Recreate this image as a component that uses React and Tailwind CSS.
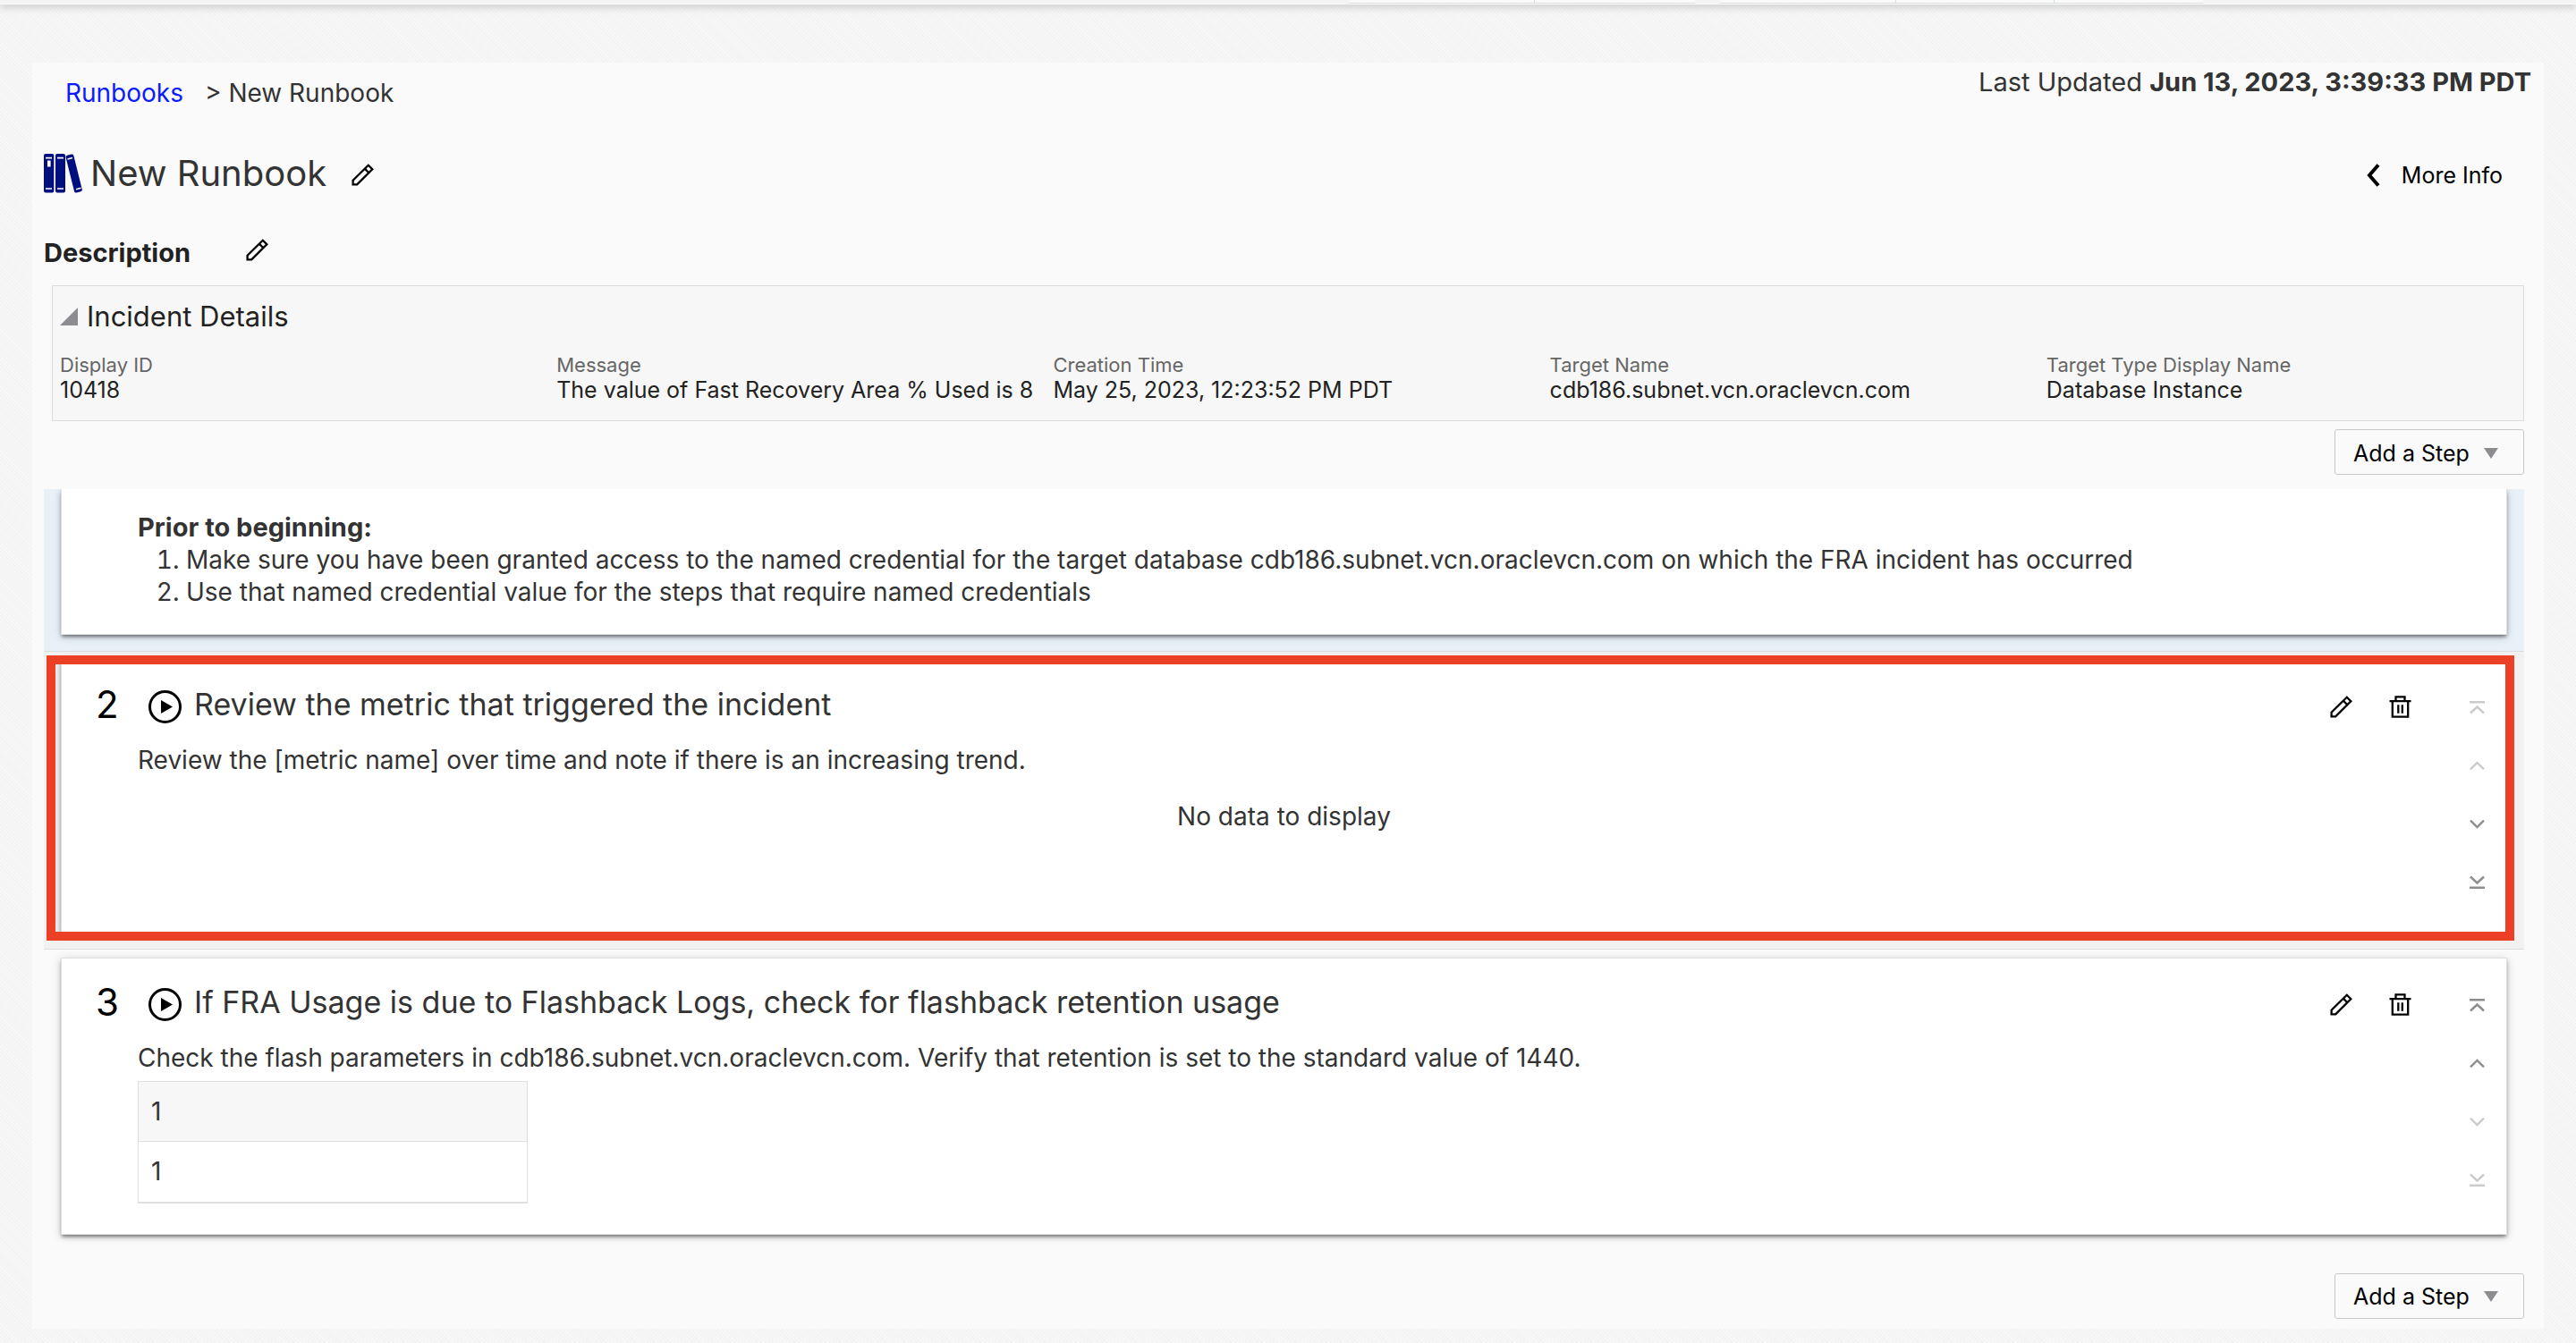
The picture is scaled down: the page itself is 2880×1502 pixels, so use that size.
import React from "react";

function PencilIcon() {
  return (
    <svg width="25" height="25" viewBox="0 0 25 25" fill="none" stroke="currentColor" strokeWidth="2.3" aria-hidden="true">
      <path d="M18.8 1.8 L23.3 6.3 L6.2 23.4 H1.6 V18.8 Z" />
      <path d="M14.8 5.6 L19.4 10.2" />
    </svg>
  );
}

function TrashIcon() {
  return (
    <svg width="25" height="25" viewBox="0 0 25 25" fill="none" stroke="currentColor" strokeWidth="2.3" aria-hidden="true">
      <path d="M0.5 6.2 H24.5 M7.5 6 V1.4 H17.5 V6 M3.8 6.2 V23.6 H21.2 V6.2" />
      <path d="M10.3 10.3 V19.8 M14.8 10.3 V19.8" />
    </svg>
  );
}

function PlayIcon() {
  return (
    <svg width="37" height="37" viewBox="0 0 37 37" aria-hidden="true">
      <circle cx="18.5" cy="18.5" r="17" fill="none" stroke="currentColor" strokeWidth="3" />
      <path d="M14 11 L27 18.5 L14 26 Z" fill="currentColor" />
    </svg>
  );
}

function BooksIcon() {
  return (
    <svg width="44" height="44" viewBox="0 0 44 44" aria-hidden="true">
      <g fill="#000f7f">
        <rect x="0" y="0" width="11.3" height="43.5" rx="2" />
        <rect x="13" y="0" width="11" height="43.5" rx="2" />
        <rect x="29.2" y="0.5" width="9" height="43" rx="2" transform="rotate(-14 33.7 22)" />
      </g>
      <g stroke="#fff" strokeWidth="1.6">
        <path d="M2 4.6 H9 M2 39 H9 M15 4.6 H22 M15 39 H22" />
        <path d="M26.5 6 L32 4.4 M36 39.7 L41.5 38.2" />
      </g>
      <rect x="4" y="7.5" width="3.6" height="7" fill="#fff" />
    </svg>
  );
}

const ARROWS = {
  top: "M1 2.2 H18 M2 14.5 L9.5 7.5 L17 14.5",
  up: "M2 12.3 L9.5 5 L17 12.3",
  down: "M2 4.7 L9.5 12 L17 4.7",
  bottom: "M2 2.5 L9.5 9.5 L17 2.5 M1 14.8 H18",
};

function MoveButton({ kind, label, disabled }) {
  return (
    <button
      type="button"
      aria-label={label}
      disabled={disabled}
      className="flex size-8 items-center justify-center text-[#8b8d90] disabled:text-[#cbcbcb]"
    >
      <svg width="19" height="17" viewBox="0 0 19 17" fill="none" stroke="currentColor" strokeWidth="2.4" aria-hidden="true">
        <path d={ARROWS[kind]} />
      </svg>
    </button>
  );
}

function AddStepButton() {
  return (
    <button
      type="button"
      className="flex h-[51px] w-[212px] items-center gap-4 rounded-[3px] border border-[#c8c8c8] pt-0.5 pl-5 text-[25px] leading-7 whitespace-nowrap text-black"
    >
      Add a Step
      <svg width="16" height="12" viewBox="0 0 16 12" fill="#8b8d90" aria-hidden="true">
        <path d="M0 0 H16 L8 12 Z" />
      </svg>
    </button>
  );
}

const CARD =
  "mx-[19px] border-[#dfdfdf] bg-white shadow-[0_3px_4px_-1px_rgba(0,0,0,0.5),0_2px_10px_rgba(0,0,0,0.16)]";

function StepCard({ number, title, text, atTop, atBottom, children }) {
  return (
    <article className={`${CARD} flex min-h-[305px] border`}>
      <div className="min-w-0 flex-1 pt-[25px]">
        <header className="flex h-12 items-center pr-[18px] pl-[38px]">
          <span className="w-[59px] text-[42px] leading-[48px] text-black">{number}</span>
          <button type="button" aria-label={`Run step ${number}`} className="mt-1 mr-3.5 text-black">
            <PlayIcon />
          </button>
          <h3 className="flex-1 text-[34px] leading-[48px]">{title}</h3>
          <div className="flex gap-[34px] pt-1 text-black">
            <button type="button" aria-label="Edit step" className="flex size-8 items-center justify-center">
              <PencilIcon />
            </button>
            <button type="button" aria-label="Delete step" className="flex size-8 items-center justify-center">
              <TrashIcon />
            </button>
          </div>
        </header>
        <div className="mt-5 pb-[34px] pl-[85px]">
          <p>{text}</p>
          {children}
        </div>
      </div>
      <div className="flex w-[85px] flex-col items-end gap-[33px] pt-9 pr-[17px]">
        <MoveButton kind="top" label="Move to top" disabled={atTop} />
        <MoveButton kind="up" label="Move up" disabled={atTop} />
        <MoveButton kind="down" label="Move down" disabled={atBottom} />
        <MoveButton kind="bottom" label="Move to bottom" disabled={atBottom} />
      </div>
    </article>
  );
}

const DETAILS = [
  ["Display ID", "10418"],
  ["Message", "The value of Fast Recovery Area % Used is 8"],
  ["Creation Time", "May 25, 2023, 12:23:52 PM PDT"],
  ["Target Name", "cdb186.subnet.vcn.oraclevcn.com"],
  ["Target Type Display Name", "Database Instance"],
];

export default function App() {
  return (
    <div className="min-h-screen bg-[repeating-linear-gradient(45deg,#f3f3f3_0px,#f3f3f3_1px,#f8f8f8_2px,#f8f8f8_3px)] pb-[18px] font-['Inter',sans-serif] text-[28px] leading-9 text-[#333]">
      <div className="flex h-[5px] justify-end border-b border-white bg-[#f4f4f4] pr-[417px] shadow-[0_2px_10px_rgba(0,0,0,0.28)]">
        <div className="w-[208px] border-r border-b border-[#d8dde0] bg-[#fafafa]" />
        <div className="mr-7 w-[179px] border-b border-[#d8dde0] bg-[#fafafa]" />
        <div className="w-[197px] border-r border-b border-[#d8dde0] bg-[#fafafa]" />
        <div className="w-[177px] border-r border-b border-[#d8dde0] bg-[#fafafa]" />
        <div className="w-[166px] border-b border-[#d8dde0] bg-[#fafafa]" />
      </div>

      <main className="mx-9 mt-[65px] bg-[#fafafa] pr-[22px] pb-[11px] pl-[13px]">
        <div className="-mr-2 flex items-start justify-between">
          <nav aria-label="Breadcrumb" className="flex pt-4 pl-6">
            <a href="#runbooks" className="mr-6 text-[#0a1cff]">Runbooks</a>
            <span>&gt; New Runbook</span>
          </nav>
          <p className="pt-1 text-[29px]">
            Last Updated <b className="font-bold">Jun 13, 2023, 3:39:33 PM PDT</b>
          </p>
        </div>

        <div className="mt-12 flex h-12 items-center">
          <BooksIcon />
          <h1 className="ml-2 text-[40px] leading-[48px]">New Runbook</h1>
          <button type="button" aria-label="Edit name" className="mt-0.5 ml-7 text-black">
            <PencilIcon />
          </button>
          <button type="button" className="mt-1 mr-6 ml-auto flex items-center gap-6 text-[25px] leading-7 text-black">
            <svg width="15" height="26" viewBox="0 0 15 26" fill="none" stroke="currentColor" strokeWidth="4" aria-hidden="true">
              <path d="M13 1.5 L3 13 L13 24.5" />
            </svg>
            More Info
          </button>
        </div>

        <div className="mt-[47px] flex items-start">
          <h2 className="w-[226px] text-[29px] font-bold text-[#222]">Description</h2>
          <button type="button" aria-label="Edit description" className="mt-0.5 text-black">
            <PencilIcon />
          </button>
        </div>

        <section className="mt-[18px] ml-[9px] border border-[#dcdcdc] bg-[#f7f7f7] px-2 pt-3.5 pb-5">
          <h2>
            <button type="button" aria-expanded="true" className="flex items-center gap-2.5 text-[31px] leading-10 text-[#222]">
              <svg width="20" height="20" viewBox="0 0 20 20" fill="#8b8d90" aria-hidden="true">
                <path d="M20 0 V20 H0 Z" />
              </svg>
              Incident Details
            </button>
          </h2>
          <dl className="mt-5 grid grid-cols-5 gap-x-[30px] leading-7 whitespace-nowrap">
            {DETAILS.map(([label, value]) => (
              <div key={label} className="min-w-0">
                <dt className="text-[22px] text-[#666]">{label}</dt>
                <dd className="text-[25px] text-[#222]">{value}</dd>
              </div>
            ))}
          </dl>
        </section>

        <div className="mt-[9px] flex justify-end">
          <AddStepButton />
        </div>

        <section aria-label="Steps" className="mt-4">
          <div className="overflow-hidden border-b border-[#dcdcdc] bg-[#e8f0f8] pb-[18px]">
            <article className={`${CARD} border-x border-b pt-[25px] pb-[29px] pl-[85px]`}>
              <p className="text-[29px] font-bold">Prior to beginning:</p>
              <ol className="list-decimal pl-[54px]">
                <li>
                  Make sure you have been granted access to the named credential for the target database
                  cdb186.subnet.vcn.oraclevcn.com on which the FRA incident has occurred
                </li>
                <li>Use that named credential value for the steps that require named credentials</li>
              </ol>
            </article>
          </div>

          <div className="relative border-b border-[#dcdcdc] bg-[#f1f1f1] pt-[9px] pb-[18px]">
            <StepCard
              number="2"
              title="Review the metric that triggered the incident"
              text="Review the [metric name] over time and note if there is an increasing trend."
              atTop
            >
              <p className="mt-[27px] text-center">No data to display</p>
            </StepCard>
            <div className="pointer-events-none absolute top-1 right-[11px] bottom-[9px] left-[3px] border-10 border-[#eb4026]" />
          </div>

          <div className="pt-[9px]">
            <StepCard
              number="3"
              title="If FRA Usage is due to Flashback Logs, check for flashback retention usage"
              text="Check the flash parameters in cdb186.subnet.vcn.oraclevcn.com. Verify that retention is set to the standard value of 1440."
              atBottom
            >
              <table className="mt-2 w-[436px] border border-b-2 border-[#dfdfdf] text-left">
                <thead>
                  <tr className="h-[67px] border-b border-[#dfdfdf] bg-[#f7f7f7]">
                    <th scope="col" className="px-3.5 font-normal">1</th>
                  </tr>
                </thead>
                <tbody>
                  <tr className="h-[68px]">
                    <td className="px-3.5">1</td>
                  </tr>
                </tbody>
              </table>
            </StepCard>
          </div>
        </section>

        <div className="mt-[43px] flex justify-end">
          <AddStepButton />
        </div>
      </main>
    </div>
  );
}
